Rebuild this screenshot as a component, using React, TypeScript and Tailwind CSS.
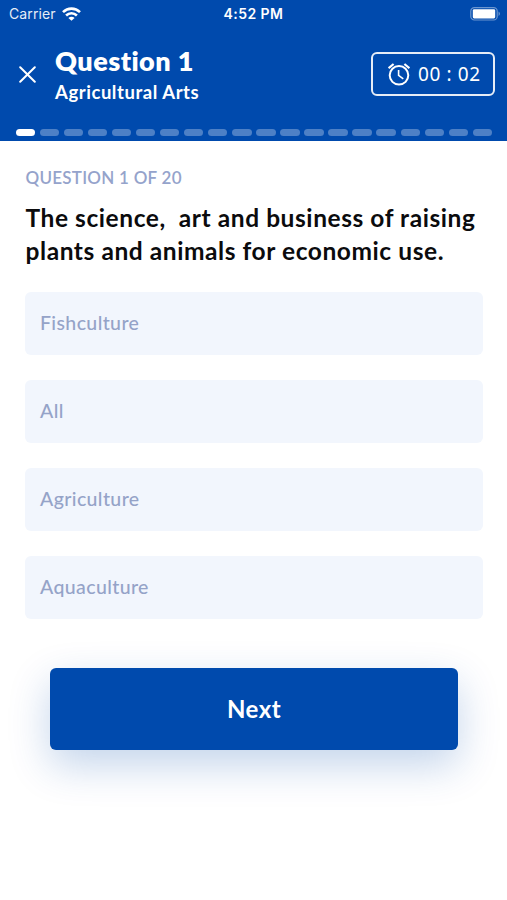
import { useState } from 'react';

const TOTAL = 20;
const OPTIONS = ['Fishculture', 'All', 'Agriculture', 'Aquaculture'];

function WifiIcon() {
  return (
    <svg width="19" height="14" viewBox="0 0 19 14" fill="none" stroke="white" strokeWidth="2.6">
      <path d="M1 5.1C5.8 .4 13.2 .4 18 5.1" />
      <path d="M4.1 8.5C7.2 5.5 11.8 5.5 14.9 8.5" />
      <path d="M9.5 13.8L6.4 10.9C8.2 9.3 10.8 9.3 12.6 10.9Z" fill="white" stroke="none" />
    </svg>
  );
}

function BatteryIcon() {
  return (
    <svg width="31" height="14" viewBox="0 0 31 14" fill="none">
      <rect x=".8" y=".6" width="26.4" height="12.4" rx="3.6" stroke="white" strokeOpacity=".42" strokeWidth="1.2" />
      <rect x="2.8" y="2.2" width="22.4" height="9.2" rx="1.4" fill="white" />
      <path d="M28.6 4.6C30.2 5.3 30.2 8.3 28.6 9Z" fill="white" fillOpacity=".5" />
    </svg>
  );
}

function AlarmIcon() {
  return (
    <svg width="22" height="23" viewBox="0 0 22 23" fill="none" stroke="white" strokeWidth="2">
      <circle cx="11" cy="12.3" r="9.3" />
      <path d="M10.6 7V12.4L15.3 15.8" strokeWidth="1.6" />
      <path d="M.6 5.2L5.6 1M16.4 1L21.4 5.2" strokeWidth="2.2" />
    </svg>
  );
}

export default function App() {
  const [current] = useState(1);
  const [selected, setSelected] = useState<string | null>(null);

  return (
    <div className="h-[900px] w-[507px] overflow-hidden bg-white font-['Lato',sans-serif]">
      <header className="flex h-[141px] flex-col bg-[#004aad] text-white">
        {/* Status bar */}
        <div className="grid h-[27px] grid-cols-3 items-center pl-[9px] pr-[9px] font-['Inter',sans-serif] text-[14px]">
          <div className="flex items-center gap-[6px]">
            <span className="tracking-[0.1px] opacity-90">Carrier</span>
            <WifiIcon />
          </div>
          <span className="text-center font-semibold tracking-[0.45px]">4:52 PM</span>
          <div className="-mr-[3px] flex justify-end"><BatteryIcon /></div>
        </div>

        <div className="flex h-[94px] items-center pl-[19px] pr-[12px]">
          <button aria-label="Close">
            <svg width="17" height="17" viewBox="0 0 17 17" stroke="white" strokeWidth="2" strokeLinecap="round">
              <path d="M1.2 1.2L15.8 15.8M15.8 1.2L1.2 15.8" />
            </svg>
          </button>
          <div className="ml-[19px] whitespace-nowrap pt-[2px]">
            <h1 className="text-[27px] font-extrabold leading-[34px] tracking-[0.45px]">Question 1</h1>
            <p className="text-[18.5px] font-bold leading-[28px] tracking-[0.55px]">Agricultural Arts</p>
          </div>
          <div className="ml-auto flex h-[44px] w-[124px] items-center rounded-md border-2 border-white/90 pl-[15px]">
            <AlarmIcon />
            <span className="ml-[8px] whitespace-nowrap font-['Noto_Sans',sans-serif] text-[19px] tracking-[0.6px]">00 : 02</span>
          </div>
        </div>

        <div className="flex gap-[4.6px] pl-[15.5px] pr-[15px] pt-[8px]">
          {Array.from({ length: TOTAL }, (_, i) => (
            <div key={i} className={`h-[6.5px] flex-1 rounded-full ${i < current ? 'bg-white' : 'bg-[#4d80c6]'}`} />
          ))}
        </div>
      </header>

      <main className="px-[25px] pt-[24px]">
        <p className="pl-[0.5px] text-[17px] font-semibold leading-[26px] tracking-[0.25px] text-[#95a3cb]">QUESTION {current} OF {TOTAL}</p>
        <h2 className="mt-[10px] whitespace-pre pl-[0.5px] text-[24.5px] font-bold leading-[33px] tracking-[0.57px] text-[#0b0b0d]">
          {'The science,  art and business of raising\nplants and animals for economic use.'}
        </h2>

        <div className="mt-[25px] flex flex-col gap-[25px]">
          {OPTIONS.map(o => (
            <button
              key={o}
              onClick={() => setSelected(o)}
              className={`flex h-[63px] w-[458px] items-center rounded-[6px] px-[15px] pb-[2px] text-[19.5px] font-medium tracking-[0.38px] text-[#95a3c8] ${selected === o ? 'bg-[#dce7fa]' : 'bg-[#f2f6fd]'}`}
            >
              {o}
            </button>
          ))}
        </div>

        <button className="ml-[25px] mt-[49px] h-[82px] w-[408px] rounded-[6px] bg-[#004aad] text-[24px] font-bold tracking-[0.5px] text-white shadow-[0_15px_42px_rgba(0,74,173,0.24)]">
          Next
        </button>
      </main>
    </div>
  );
}
